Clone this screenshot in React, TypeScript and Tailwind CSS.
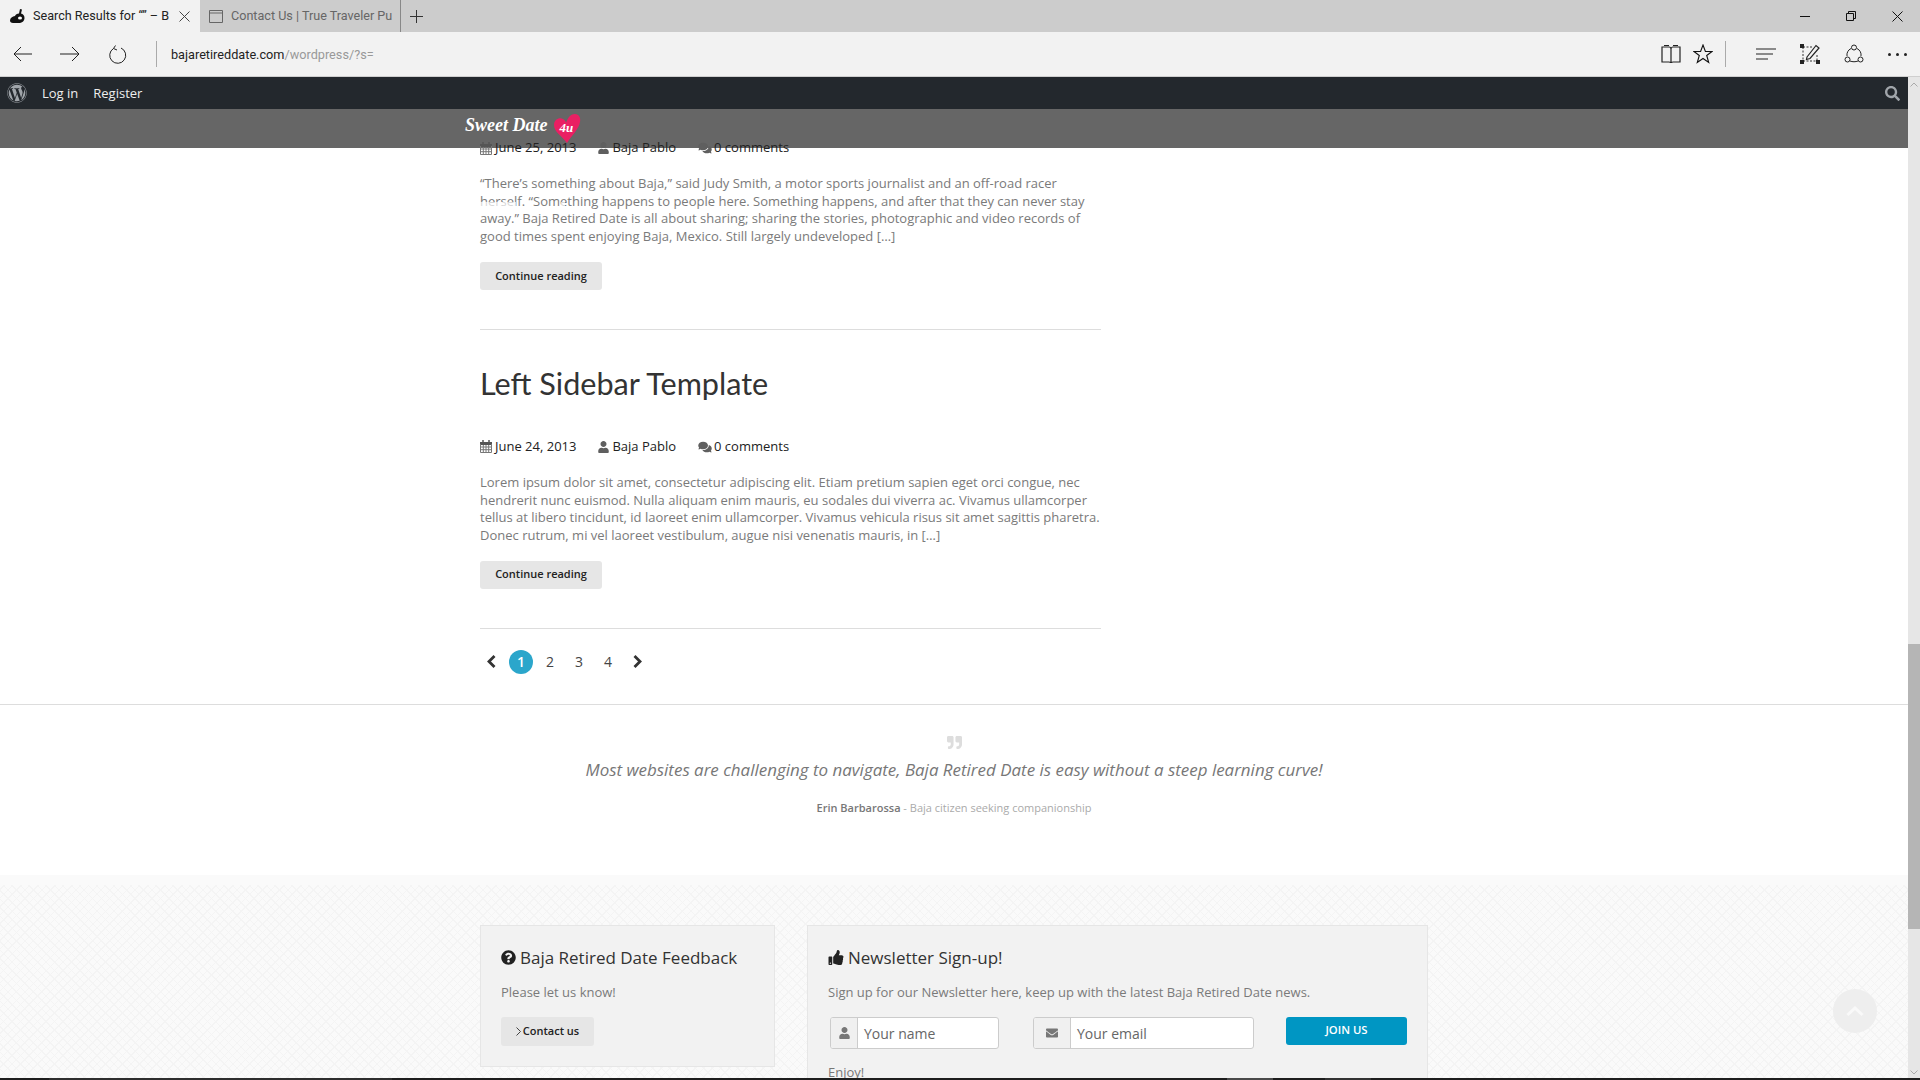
import React from "react";
import { FaUser, FaComments, FaQuoteRight, FaQuestionCircle, FaThumbsUp, FaEnvelope, FaSearch, FaWordpress } from "react-icons/fa";

function Calendar() {
  return (
    <svg width="12" height="13" viewBox="0 0 12 13" className="mr-[3px] shrink-0">
      <path d="M0 2h12v3H0z" fill="#555" />
      <path d="M3 0v3M9 0v3" stroke="#555" strokeWidth="1.500" fill="none" />
      <path d="M.500 4v8.500h11V4M.500 7h11M.500 9.700h11M3.300 5v7.500M6 5v7.500M8.700 5v7.500" stroke="#777" strokeWidth="1" fill="none" />
    </svg>
  );
}

function Meta({ date }: { date: string }) {
  return (
    <div className="flex items-center h-[18px] text-[13px] text-[#222] relative z-10">
      <Calendar />
      <span>{date}</span>
      <FaUser className="w-[11px] h-[12px] text-[#5f5f5f] ml-[22px] mr-[3px]" />
      <span>Baja Pablo</span>
      <FaComments className="w-[14px] h-[12px] text-[#5f5f5f] ml-[22px] mr-[2px]" />
      <span>0 comments</span>
    </div>
  );
}

function Para({ lines }: { lines: string[] }) {
  return (
    <div className="text-[13px] leading-[17.7px] text-[#7a7a7a]">
      {lines.map((l) => (
        <div key={l} className="whitespace-nowrap">{l}</div>
      ))}
    </div>
  );
}

function Continue() {
  return (
    <div className="w-[122px] h-[28px] rounded-[3px] bg-[#e6e6e6] flex items-center justify-center text-[11px] font-semibold text-[#222]">
      Continue reading
    </div>
  );
}

export default function App() {
  return (
    <div className="w-[1920px] h-[1080px] overflow-hidden flex flex-col bg-white font-['Open_Sans',sans-serif]">
      {/* tabs */}
      <div className="h-8 shrink-0 bg-[#cccccc] flex items-stretch text-[12.6px]">
        <div className="w-[200px] bg-[#f2f2f2] flex items-center pl-[10px] text-[#222]">
          <svg width="15" height="16" viewBox="0 0 15 16" className="mr-[8px] shrink-0">
            <path d="M10 1l2 .500-1 4c2 .500 3.500 2 3.500 4.500 0 3-2.500 5-6 5H3c-2 0-3-1-3-2.500C0 10 2.500 8.500 5 8c.500-1.500 2-2.500 4-2.500z" fill="#111" />
            <ellipse cx="10" cy="10" rx="2" ry="1.500" fill="#fff" />
          </svg>
          <span className="whitespace-nowrap w-[136px] pt-[1px] font-['Roboto',sans-serif]">Search Results for “” – B</span>
          <svg width="11" height="11" viewBox="0 0 11 11" className="ml-[10px]"><path d="M.500.500l10 10M10.500.500l-10 10" stroke="#444" fill="none" /></svg>
        </div>
        <div className="w-[201px] border-r border-[#888] flex items-center pl-[9px] text-[#666]">
          <svg width="14" height="13" viewBox="0 0 14 13" className="mr-[8px] shrink-0"><path d="M.500.500h13v12H.500zM.500 3h13" stroke="#666" fill="none" /></svg>
          <span className="whitespace-nowrap pt-[1px] font-['Roboto',sans-serif]">Contact Us | True Traveler Pu</span>
        </div>
        <div className="ml-[9px] flex items-center">
          <svg width="13" height="13" viewBox="0 0 13 13"><path d="M6.500 0v13M0 6.500h13" stroke="#333" fill="none" /></svg>
        </div>
        <div className="flex-1" />
        <div className="flex items-center pr-[17px] gap-[36px]">
          <svg width="10" height="10" viewBox="0 0 10 10"><path d="M0 5.500h10" stroke="#111" fill="none" /></svg>
          <svg width="10" height="10" viewBox="0 0 10 10"><path d="M.500 2.500h7v7h-7zM2.500 2.500v-2h7v7h-2" stroke="#111" fill="none" /></svg>
          <svg width="11" height="11" viewBox="0 0 11 11"><path d="M.500.500l10 10M10.500.500l-10 10" stroke="#111" fill="none" /></svg>
        </div>
      </div>
      {/* address */}
      <div className="h-[45px] shrink-0 bg-[#f2f2f2] border-b border-[#cfcfcf] flex items-center text-[12.7px]">
        <svg width="19" height="16" viewBox="0 0 19 16" className="ml-[13px]"><path d="M19 8H1M8 1L1 8l7 7" stroke="#222" fill="none" /></svg>
        <svg width="20" height="16" viewBox="0 0 20 16" className="ml-[28px]"><path d="M0 8h19M12 1l7 7-7 7" stroke="#222" fill="none" /></svg>
        <svg width="18" height="19" viewBox="0 0 18 19" className="ml-[29px]"><path d="M12 3a8 8 0 1 1-7.500 .500M6.500 .500L4.500 3.500 8 5" stroke="#222" fill="none" /></svg>
        <div className="w-px h-[26px] bg-[#aaa] ml-[29px] mr-[14px]" />
        <span className="text-[#222] pt-[1px] font-['Roboto',sans-serif]">bajaretireddate.com</span>
        <span className="text-[#999] pt-[1px] font-['Roboto',sans-serif]">/wordpress/?s=</span>
        <div className="flex-1" />
        <svg width="20" height="20" viewBox="0 0 20 20"><path d="M1 3h7c1 0 2 1 2 2 0-1 1-2 2-2h7v15h-7c-1 0-2 .500-2 1 0-.500-1-1-2-1H1zM10 5v14M3 1.500h5M12 1.500h5" stroke="#222" strokeWidth="1.200" fill="none" /></svg>
        <svg width="20" height="20" viewBox="0 0 20 20" className="ml-[12px]"><path d="M10 1l2.400 6.500H19l-5.300 4 2 7L10 14.500 4.300 18.500l2-7L1 7.500h6.600z" stroke="#111" strokeWidth="1.100" fill="none" /></svg>
        <div className="w-px h-[26px] bg-[#aaa] ml-[12px]" />
        <svg width="20" height="12" viewBox="0 0 20 12" className="ml-[30px]"><path d="M0 1h20M0 6h17M0 11h12" stroke="#222" fill="none" /></svg>
        <svg width="20" height="20" viewBox="0 0 20 20" className="ml-[24px]"><path d="M3 3h10M3 17h14M3 3v14M17 11v6" stroke="#333" strokeDasharray="2 1.500" fill="none" /><path d="M0 0h4v4H0zM16 16h4v4h-4zM0 16h4v4H0z" fill="#222" /><path d="M7 13L16 1.500l3 2.500-9 10.500-3.500 1z" stroke="#222" strokeWidth="1.200" fill="none" /></svg>
        <svg width="20" height="20" viewBox="0 0 20 20" className="ml-[24px]"><path d="M7 4.500C4 6 2.500 9 3 12M13 4.500c3 1.500 4.500 4.500 4 7.500M6 17c2.500 1 5.500 1 8 0" stroke="#222" fill="none" /><circle cx="10" cy="3.500" r="2.500" stroke="#222" fill="none" /><circle cx="3.500" cy="15.500" r="2.500" stroke="#222" fill="none" /><circle cx="16.500" cy="15.500" r="2.500" stroke="#222" fill="none" /></svg>
        <div className="ml-[24px] mr-[13px] flex gap-[5px]">
          <div className="w-[3px] h-[3px] bg-[#222] rounded-full" />
          <div className="w-[3px] h-[3px] bg-[#222] rounded-full" />
          <div className="w-[3px] h-[3px] bg-[#222] rounded-full" />
        </div>
      </div>
      {/* page */}
      <div className="flex-1 min-h-0 flex">
        <div className="flex-1 min-w-0 relative overflow-hidden flex flex-col">
          <div className="h-[32px] shrink-0 bg-[#23282d] flex items-center text-[13px] text-[#eee] relative z-20">
            <FaWordpress className="w-[20px] h-[20px] text-[#a0a5aa] ml-[7px]" />
            <span className="ml-[15px] pt-[1px]">Log in</span>
            <span className="ml-[15px] pt-[1px]">Register</span>
            <div className="flex-1" />
            <FaSearch className="w-[15px] h-[15px] text-[#a0a5aa] mr-[8px]" />
          </div>
          <div className="absolute left-0 right-0 top-[32px] h-[39px] bg-[#666]">
            <div className="absolute left-[465px] top-[4px] flex items-start">
              <span className="text-[#fff] text-[18px] italic font-bold font-['Liberation_Serif',serif] leading-[24px] whitespace-nowrap">Sweet Date</span>
              <div className="relative w-[28px] h-[30px] ml-[5px]">
                <svg width="28" height="30" viewBox="0 0 28 30"><path d="M14 30C9 23 1 19 1 12 1 7 6 4 10 6c2 1 3 3 3 4 1-4 4-9 9-9 4 0 6 4 5 8-1 7-8 13-13 21z" fill="#ea1f63" /></svg>
                <span className="absolute left-[7px] top-[7px] text-[13px] leading-[16px] italic font-bold text-white font-['Liberation_Serif',serif]">4u</span>
              </div>
            </div>
          </div>
          <div className="pl-[480px] pt-[30px] relative z-10">
            <div className="w-[621px]">
              <Meta date="June 25, 2013" />
              <div className="mt-[18px]">
                <Para lines={["“There’s something about Baja,” said Judy Smith, a motor sports journalist and an off-road racer", "herself. “Something happens to people here. Something happens, and after that they can never stay", "away.” Baja Retired Date is all about sharing; sharing the stories, photographic and video records of", "good times spent enjoying Baja, Mexico. Still largely undeveloped […]"]} />
              </div>
              <div className="mt-[16px]"><Continue /></div>
              <div className="h-px bg-[#ddd] mt-[39px]" />
              <h2 className="mt-[31px] font-['Lato',sans-serif] text-[30.6px] leading-[46px] text-[#333]">Left Sidebar Template</h2>
              <div className="mt-[31px]"><Meta date="June 24, 2013" /></div>
              <div className="mt-[18px]">
                <Para lines={["Lorem ipsum dolor sit amet, consectetur adipiscing elit. Etiam pretium sapien eget orci congue, nec", "hendrerit nunc euismod. Nulla aliquam enim mauris, eu sodales dui viverra ac. Vivamus ullamcorper", "tellus at libero tincidunt, id laoreet enim ullamcorper. Vivamus vehicula risus sit amet sagittis pharetra.", "Donec rutrum, mi vel laoreet vestibulum, augue nisi venenatis mauris, in […]"]} />
              </div>
              <div className="mt-[16px]"><Continue /></div>
              <div className="h-px bg-[#ddd] mt-[39px]" />
              <div className="flex items-center h-[24px] mt-[21px] text-[14px] text-[#444]">
                <svg width="9" height="13" viewBox="0 0 9 13" className="ml-[7px]"><path d="M7.500 1L2 6.500 7.500 12" stroke="#333" strokeWidth="2.800" fill="none" /></svg>
                <div className="ml-[13px] w-[24px] h-[24px] rounded-full bg-[#2ba6cb] text-white flex items-center justify-center font-semibold">1</div>
                <span className="ml-[13px]">2</span>
                <span className="ml-[21px]">3</span>
                <span className="ml-[21px]">4</span>
                <svg width="9" height="13" viewBox="0 0 9 13" className="ml-[21px]"><path d="M1.500 1L7 6.500 1.500 12" stroke="#333" strokeWidth="2.800" fill="none" /></svg>
              </div>
            </div>
          </div>
          <div className="absolute left-[480px] top-[125px] w-[36px] h-[4px] bg-white/70 z-20" />
          <div className="absolute left-[561px] top-[125px] w-[4px] h-[4px] bg-white/70 z-20" />
          <div className="h-px bg-[#ddd] mt-[30px] shrink-0" />
          {/* quote */}
          <div className="h-[170px] shrink-0 flex flex-col items-center">
            <FaQuoteRight className="w-[17px] h-[15px] text-[#ddd] mt-[30px]" />
            <div className="mt-[8px] text-[16.95px] italic text-[#777] leading-[24px] whitespace-nowrap">Most websites are challenging to navigate, Baja Retired Date is easy without a steep learning curve!</div>
            <div className="mt-[18px] text-[11px] leading-[16px] whitespace-nowrap text-[#aaa]"><span className="font-semibold text-[#777]">Erin Barbarossa</span> - Baja citizen seeking companionship</div>
          </div>
          {/* footer */}
          <div className="flex-1 min-h-0 bg-[#fafafa] relative">
            <div className="absolute inset-x-0 top-[10px] bottom-0 bg-[repeating-linear-gradient(45deg,#f4f4f4_0,#f4f4f4_1px,transparent_1px,transparent_6px),repeating-linear-gradient(-45deg,#f4f4f4_0,#f4f4f4_1px,transparent_1px,transparent_6px)]" />
            <div className="relative pl-[480px] pt-[50px] flex items-start">
              <div className="w-[295px] h-[142px] bg-[#f2f2f2] border border-[#e6e6e6] pl-[20px] pt-[20px]">
                <div className="flex items-center h-[24px] text-[17px] text-[#333]">
                  <FaQuestionCircle className="w-[15px] h-[15px] text-[#222] mr-[4px]" />
                  <span>Baja Retired Date Feedback</span>
                </div>
                <div className="mt-[13px] text-[13px] leading-[18px] text-[#7a7a7a]">Please let us know!</div>
                <div className="mt-[16px] w-[93px] h-[29px] bg-[#e6e6e6] rounded-[3px] flex items-center justify-center text-[11px] font-semibold text-[#222]">
                  <svg width="5" height="9" viewBox="0 0 5 9" className="mr-[2px]"><path d="M.500.500l4 4-4 4" stroke="#444" fill="none" /></svg>Contact us
                </div>
              </div>
              <div className="ml-[32px] w-[621px] h-[160px] bg-[#f2f2f2] border border-[#e6e6e6] pl-[20px] pt-[20px]">
                <div className="flex items-center h-[24px] text-[17px] text-[#333]">
                  <FaThumbsUp className="w-[16px] h-[15px] text-[#222] mr-[4px]" />
                  <span>Newsletter Sign-up!</span>
                </div>
                <div className="mt-[13px] text-[13px] leading-[18px] text-[#7a7a7a] whitespace-nowrap">Sign up for our Newsletter here, keep up with the latest Baja Retired Date news.</div>
                <div className="mt-[16px] flex items-start">
                  <div className="ml-[2px] w-[169px] h-[32px] rounded-[3px] border border-[#ccc] bg-white flex items-stretch overflow-hidden">
                    <div className="w-[27px] bg-[#f0f0f0] border-r border-[#ccc] flex items-center justify-center"><FaUser className="w-[11px] h-[12px] text-[#777]" /></div>
                    <div className="pl-[6px] pt-[1px] flex items-center text-[14px] text-[#666]">Your name</div>
                  </div>
                  <div className="ml-[34px] w-[221px] h-[32px] rounded-[3px] border border-[#ccc] bg-white flex items-stretch overflow-hidden">
                    <div className="w-[37px] bg-[#f0f0f0] border-r border-[#ccc] flex items-center justify-center"><FaEnvelope className="w-[14px] h-[12px] text-[#777]" /></div>
                    <div className="pl-[6px] pt-[1px] flex items-center text-[14px] text-[#666]">Your email</div>
                  </div>
                  <div className="ml-[32px] w-[121px] h-[28px] rounded-[3px] bg-[#0096c3] flex items-center justify-center text-[11.3px] font-semibold text-white">JOIN US</div>
                </div>
                <div className="mt-[14px] text-[13px] leading-[18px] text-[#777]">Enjoy!</div>
              </div>
            </div>
            <div className="absolute right-[31px] top-[114px] w-[44px] h-[44px] rounded-full bg-[#eeeeee] flex items-center justify-center">
              <svg width="18" height="12" viewBox="0 0 18 12"><path d="M1.500 10L9 3l7.500 7" stroke="#f9f9f9" strokeWidth="3" fill="none" /></svg>
            </div>
          </div>
        </div>
        {/* scrollbar */}
        <div className="w-[12px] shrink-0 bg-[#e6e6e6] flex flex-col items-center">
          <svg width="8" height="5" viewBox="0 0 8 5" className="mt-[5px]"><path d="M.500 4.500L4 1l3.500 3.500" stroke="#aaa" fill="none" /></svg>
          <div className="w-full h-[285px] bg-[#b5b5b5] mt-[557px]" />
          <div className="flex-1" />
          <svg width="8" height="5" viewBox="0 0 8 5" className="mb-[3px]"><path d="M.500.500L4 4l3.500-3.500" stroke="#aaa" fill="none" /></svg>
        </div>
      </div>
      <div className="h-[2px] shrink-0 bg-[#1e1e1e] flex">
        <div className="w-[49px]" />
        <div className="w-[343px] bg-[#2e2e2e]" />
        <div className="w-[835px]" />
        <div className="w-[46px] bg-[#4a4a4a]" />
        <div className="w-[52px]" />
        <div className="w-[46px] bg-[#333]" />
      </div>
    </div>
  );
}
